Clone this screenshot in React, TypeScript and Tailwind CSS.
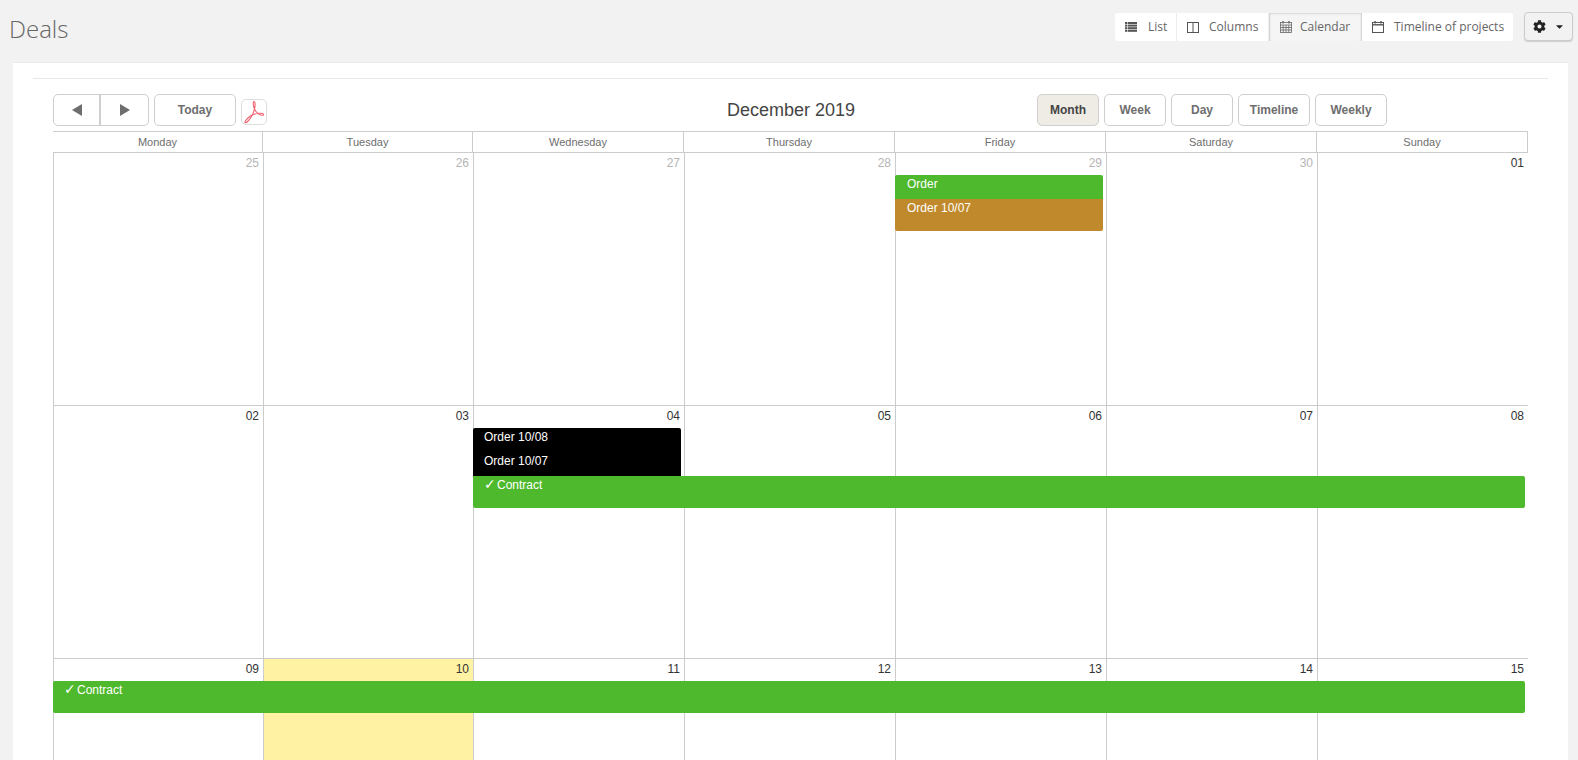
import { ReactNode } from "react";
import { FaCog, FaCaretDown } from "react-icons/fa";

const days = ["Monday", "Tuesday", "Wednesday", "Thursday", "Friday", "Saturday", "Sunday"];
const cols = "grid-cols-[210px_210px_211px_211px_211px_211px_211px]";

function ListIcon() {
  return (
    <svg width="12" height="10" viewBox="0 0 12 10" fill="#555">
      <rect x="0" y="0" width="12" height="2" />
      <rect x="0" y="2.6" width="12" height="2" />
      <rect x="0" y="5.2" width="12" height="2" />
      <rect x="0" y="7.8" width="12" height="2" />
      <path d="M2.5 0V10" stroke="#fff" strokeWidth="0.6" />
    </svg>
  );
}

function ColIcon() {
  return (
    <svg width="12" height="11" viewBox="0 0 12 11" fill="none" stroke="#555" strokeWidth="1">
      <rect x="0.5" y="0.5" width="11" height="10" />
      <path d="M6 0.5V10.5" />
    </svg>
  );
}

function CalGridIcon() {
  return (
    <svg width="12" height="12" viewBox="0 0 12 12" fill="none" stroke="#666" strokeWidth="0.8">
      <rect x="0.5" y="1.5" width="11" height="10" />
      <path d="M0.5 4H11.5M0.5 6.5H11.5M0.5 9H11.5M3.2 4V11.5M6 4V11.5M8.8 4V11.5" />
      <path d="M3 0V2.5M9 0V2.5" strokeWidth="1.4" />
    </svg>
  );
}

function CalIcon() {
  return (
    <svg width="12" height="12" viewBox="0 0 12 12" fill="none" stroke="#555" strokeWidth="1">
      <rect x="0.5" y="1.5" width="11" height="10" />
      <path d="M0.5 3.8H11.5" strokeWidth="1.4" />
      <path d="M3 0V2.5M9 0V2.5" strokeWidth="1.4" />
    </svg>
  );
}

function Arrow({ right }: { right?: boolean }) {
  return (
    <svg width="10" height="12" viewBox="0 0 10 12" fill="#6e6e6e">
      <path d={right ? "M0 0L10 6L0 12Z" : "M10 0L0 6L10 12Z"} />
    </svg>
  );
}

function Pdf() {
  return (
    <svg width="22" height="24" viewBox="0 0 22 24" fill="none" stroke="#f0606f" strokeWidth="1.1">
      <path d="M11 1.5C9.5 1.5 10.5 7 12 10C13.5 13 17 15.5 20 15.3C21.5 15 20.5 13.5 18 13.3C14 13 8 15 5.5 17.5C3 20 1.5 22 2 22.7C3 23.2 6 20.5 8.5 16.5C11 12.5 12.5 6 12 3C11.8 1.8 11.5 1.5 11 1.5Z" />
    </svg>
  );
}

function Tab({ icon, label, active, w, gap }: { icon: ReactNode; label: string; active?: boolean; w: string; gap: string }) {
  return (
    <div className={`flex h-full items-center pl-[10px] ${gap} ${w} ${active ? "border-x border-[#d5d5d5] bg-[#f5f5f5] shadow-[inset_0_1px_2px_rgba(0,0,0,0.12)]" : ""}`}>
      <span className="flex w-[12px] justify-center">{icon}</span>
      <span>{label}</span>
    </div>
  );
}

function Btn({ children, w, active }: { children: ReactNode; w: string; active?: boolean }) {
  return (
    <button className={`flex h-[32px] items-center justify-center rounded-[5px] border border-[#cfcfcf] text-[12px] font-bold ${w} ${active ? "bg-[#efebe5] text-[#444]" : "bg-white text-[#6e6e6e]"}`}>
      {children}
    </button>
  );
}

function Ev({ pos, color, children }: { pos: string; color: string; children: ReactNode }) {
  return <div className={`absolute rounded-[2px] pt-px text-[12px] leading-[16px] text-white ${pos} ${color}`}>{children}</div>;
}

function Contract() {
  return (
    <>
      <span className="inline-block w-[13px] font-['DejaVu_Sans',sans-serif] text-[14px] leading-[14px]">✓</span>
      Contract
    </>
  );
}

function Week({ dates, muted = 0, today, h, children }: { dates: string[]; muted?: number; today?: number; h: string; children?: ReactNode }) {
  return (
    <div className={`relative grid ${cols} border-t border-[#cccccc] ${h}`}>
      {dates.map((d, i) => (
        <div key={d} className={`border-l border-[#cccccc] pr-[4px] pt-[2px] text-right text-[12px] leading-[16px] ${today === i ? "bg-[#fff2a3]" : ""} ${i < muted ? "text-[#b5b5b5]" : "text-[#333]"}`}>
          {d}
        </div>
      ))}
      {children}
    </div>
  );
}

export default function App() {
  return (
    <div className="h-[760px] overflow-hidden bg-[#f2f2f2] font-['Liberation_Sans',sans-serif]">
      <header className="flex h-[62px] items-start justify-between pl-[9px] pr-[5px]">
        <h1 className="mt-[12px] font-['Open_Sans',sans-serif] text-[24px] font-light leading-[33px] text-[#666]">Deals</h1>
        <div className="mt-[12px] flex items-start gap-[11px]">
          <nav className="mt-px flex h-[28px] items-center divide-x divide-[#eeeeee] rounded-[3px] bg-white font-['Open_Sans',sans-serif] text-[12px] text-[#666]">
            <Tab w="w-[62px]" gap="gap-[11px]" icon={<ListIcon />} label="List" />
            <Tab w="w-[92px]" gap="gap-[10px]" icon={<ColIcon />} label="Columns" />
            <Tab w="w-[93px]" gap="gap-[8px]" active icon={<CalGridIcon />} label="Calendar" />
            <Tab w="w-[151px]" gap="gap-[10px]" icon={<CalIcon />} label="Timeline of projects" />
          </nav>
          <button className="flex h-[29px] w-[49px] items-center justify-center gap-[8px] rounded-[4px] border border-[#cccccc] bg-[#f2f2f2] text-[#222] shadow-[0_1px_1px_rgba(0,0,0,0.15)]">
            <FaCog size={13} />
            <FaCaretDown size={11} />
          </button>
        </div>
      </header>

      <main className="ml-[13px] mr-[10px] h-[698px] overflow-hidden border-t border-[#ebebeb] bg-white px-[20px] pt-[15px]">
        <hr className="border-t border-[#e8e8e8]" />
        <div className="px-[20px] pt-[15px]">
          <div className="relative flex h-[37px] items-start">
            <div className="flex h-[32px] w-[96px] rounded-[5px] border border-[#cfcfcf]">
              <div className="flex w-[47px] items-center justify-center border-r-2 border-[#cfcfcf]"><Arrow /></div>
              <div className="flex flex-1 items-center justify-center"><Arrow right /></div>
            </div>
            <div className="ml-[5px]"><Btn w="w-[82px]">Today</Btn></div>
            <div className="ml-[5px] mt-[5px] flex h-[26px] w-[26px] items-center justify-center rounded-[5px] border border-[#dddddd]"><Pdf /></div>
            <h2 className="absolute left-[674px] top-[4px] text-[18px] leading-[24px] text-[#444]">December 2019</h2>
            <div className="absolute left-[984px] top-0 flex gap-[5px]">
              <Btn w="w-[62px]" active>Month</Btn>
              <Btn w="w-[62px]">Week</Btn>
              <Btn w="w-[62px]">Day</Btn>
              <Btn w="w-[72px]">Timeline</Btn>
              <Btn w="w-[72px]">Weekly</Btn>
            </div>
          </div>

          <div className={`grid h-[21px] ${cols} border-t border-[#cccccc] text-center text-[11px] leading-[20px] text-[#6e6e6e]`}>
            {days.map((d) => (
              <div key={d} className="border-r border-[#cccccc]">{d}</div>
            ))}
          </div>

          <Week h="h-[253px]" muted={6} dates={["25", "26", "27", "28", "29", "30", "01"]}>
            <Ev pos="left-[842px] top-[22px] h-[24px] w-[208px] rounded-b-none pl-[12px]" color="bg-[#4eb92c]">Order</Ev>
            <Ev pos="left-[842px] top-[46px] h-[32px] w-[208px] rounded-t-none pl-[12px]" color="bg-[#c0892b]">Order 10/07</Ev>
          </Week>
          <Week h="h-[253px]" dates={["02", "03", "04", "05", "06", "07", "08"]}>
            <Ev pos="left-[420px] top-[22px] h-[48px] w-[208px] rounded-b-none pl-[11px]" color="bg-black">
              <div className="h-[24px]">Order 10/08</div>
              <div>Order 10/07</div>
            </Ev>
            <Ev pos="left-[420px] top-[70px] h-[32px] w-[1052px] rounded-tl-none pl-[11px]" color="bg-[#4eb92c]"><Contract /></Ev>
          </Week>
          <Week h="h-[110px]" today={1} dates={["09", "10", "11", "12", "13", "14", "15"]}>
            <Ev pos="left-0 top-[22px] h-[32px] w-[1472px] pl-[11px]" color="bg-[#4eb92c]"><Contract /></Ev>
          </Week>
        </div>
      </main>
    </div>
  );
}
